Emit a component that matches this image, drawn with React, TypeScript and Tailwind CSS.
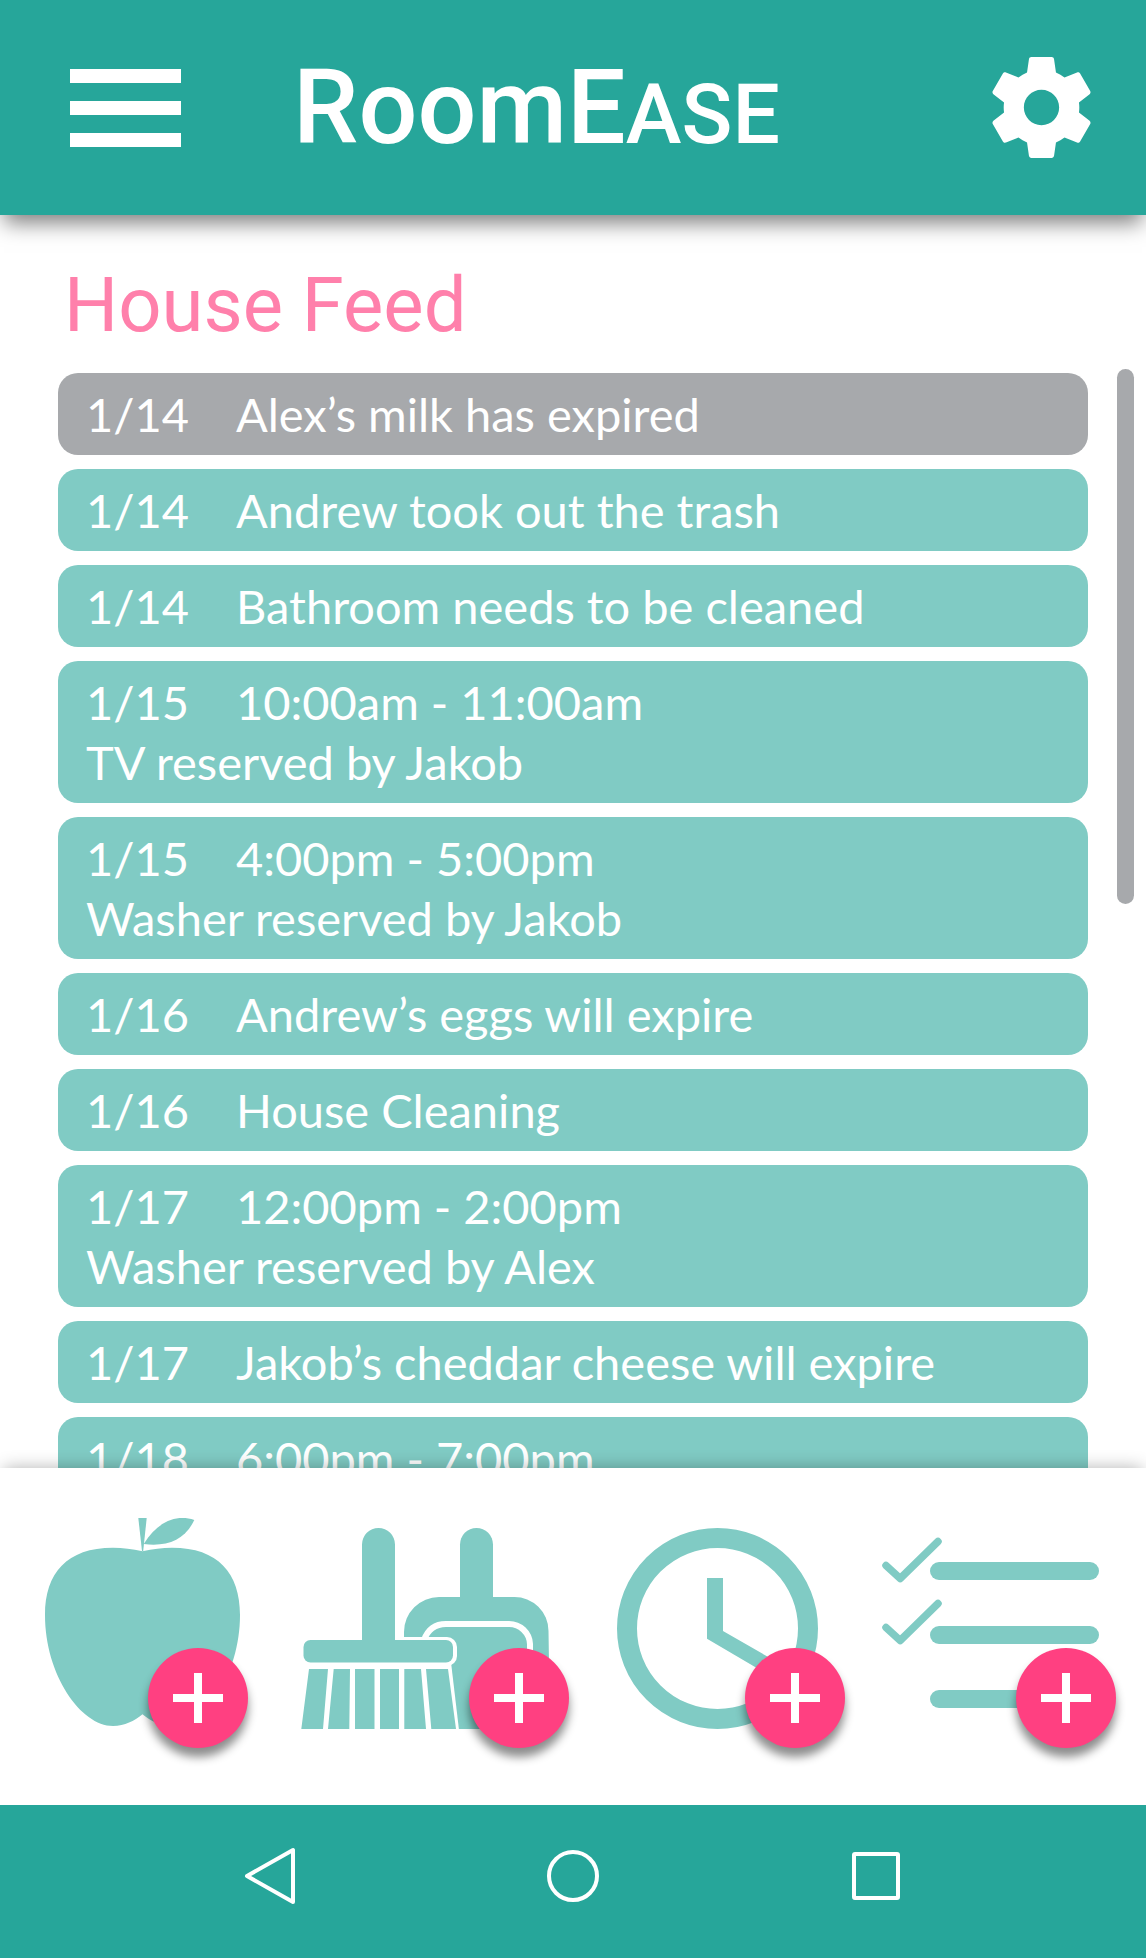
import React from "react";

type FeedEntry = { date: string; text: string; detail?: string; past?: boolean };

const entries: FeedEntry[] = [
  { date: "1/14", text: "Alex’s milk has expired", past: true },
  { date: "1/14", text: "Andrew took out the trash" },
  { date: "1/14", text: "Bathroom needs to be cleaned" },
  { date: "1/15", text: "10:00am - 11:00am", detail: "TV reserved by Jakob" },
  { date: "1/15", text: "4:00pm - 5:00pm", detail: "Washer reserved by Jakob" },
  { date: "1/16", text: "Andrew’s eggs will expire" },
  { date: "1/16", text: "House Cleaning" },
  { date: "1/17", text: "12:00pm - 2:00pm", detail: "Washer reserved by Alex" },
  { date: "1/17", text: "Jakob’s cheddar cheese will expire" },
  { date: "1/18", text: "6:00pm - 7:00pm", detail: "TV reserved by Andrew" },
];

function GearIcon() {
  return (
    <svg viewBox="0 0 24 24" className="size-[121px]" fill="currentColor" aria-hidden="true">
      <path d="M19.43 12.98c.04-.32.07-.64.07-.98s-.03-.66-.07-.98l2.11-1.65c.19-.15.24-.42.12-.64l-2-3.46c-.12-.22-.39-.3-.61-.22l-2.49 1c-.52-.4-1.08-.73-1.69-.98l-.38-2.65C14.46 2.18 14.25 2 14 2h-4c-.25 0-.46.18-.49.42l-.38 2.65c-.61.25-1.17.59-1.69.98l-2.49-1c-.23-.09-.49 0-.61.22l-2 3.46c-.13.22-.07.49.12.64l2.11 1.65c-.04.32-.07.65-.07.98s.03.66.07.98l-2.11 1.65c-.19.15-.24.42-.12.64l2 3.46c.12.22.39.3.61.22l2.49-1c.52.4 1.08.73 1.69.98l.38 2.65c.03.24.24.42.49.42h4c.25 0 .46-.18.49-.42l.38-2.65c.61-.25 1.17-.59 1.69-.98l2.49 1c.23.09.49 0 .61-.22l2-3.46c.12-.22.07-.49-.12-.64l-2.11-1.65zM12 15.5c-1.93 0-3.5-1.57-3.5-3.5s1.57-3.5 3.5-3.5 3.5 1.57 3.5 3.5-1.57 3.5-3.5 3.5z" />
    </svg>
  );
}

function AppleIcon() {
  return (
    <svg viewBox="0 0 219 230" className="h-[230px] w-[219px]" fill="currentColor" aria-hidden="true">
      <path d="M93.300 0h8.400L98.200 33h-1.200z" />
      <path d="M98.700 26C112 4 131 -4 149.300 2C140 22 122 29 98.700 26z" />
      <path d="M97.500 33.300C87 31 78 29.700 68 29.700C22 29.700 0 55 0 97C0 157 36 208 68 208C80 208 89 203 97.500 196.300C106 203 115 208 127 208C159 208 195 157 195 97C195 55 173 29.700 127 29.700C117 29.700 108 31 97.500 33.300z" />
    </svg>
  );
}

function BroomIcon() {
  return (
    <svg viewBox="0 -10 279 230" className="h-[230px] w-[279px]" fill="currentColor" aria-hidden="true">
      <path d="M159 80V16.500a16.500 16.500 0 0 1 33 0V80z" />
      <path d="M103 201V104a35 35 0 0 1 35-35h75a34 34 0 0 1 34.500 34L249 201z" />
      <path d="M123 112C127 101 134 96 145 96h63a21 21 0 0 1 21 20v12" fill="none" stroke="white" strokeWidth="6" />
      <rect x="-1" y="109" width="157" height="29" rx="10" fill="white" />
      <path d="M0 130H149.500L158 202H0z" fill="white" />
      <path d="M61 116V16.500a16.500 16.500 0 0 1 33 0V116z" />
      <rect x="2.500" y="112" width="149.500" height="22.500" rx="7" />
      <path d="M8 141h19L22 201H.3zM32.700 141H49L48.300 201H27zM54 141h19.500V201H54zM79 141h19V201H79zM103.300 141H120L125 201H103.300zM125 141h22L155 201H130.300z" />
    </svg>
  );
}

function ClockIcon() {
  return (
    <svg viewBox="0 -10 228 230" className="h-[230px] w-[228px]" fill="currentColor" aria-hidden="true">
      <circle cx="100.500" cy="100.500" r="90.500" fill="none" stroke="currentColor" strokeWidth="20" />
      <path d="M90 50h16v53l54 31l-10 12L90 110.700z" />
    </svg>
  );
}

function ChecklistIcon() {
  return (
    <svg viewBox="0 -10 235 230" className="h-[230px] w-[235px]" fill="currentColor" aria-hidden="true">
      <rect x="48" y="34" width="169" height="18" rx="9" />
      <rect x="48" y="98" width="169" height="18" rx="9" />
      <rect x="48" y="162" width="169" height="18" rx="9" />
      <g fill="none" stroke="currentColor" strokeWidth="7.500" strokeLinecap="round" strokeLinejoin="round">
        <path d="M4 37.500L18.200 50.500L56 13.500" />
        <path d="M4 99.500L18.200 112.500L56 75.500" />
      </g>
    </svg>
  );
}

const actions = [
  { name: "food", Icon: AppleIcon, place: "left-[103px]" },
  { name: "cleaning", Icon: BroomIcon, place: "left-[168px]" },
  { name: "reservation", Icon: ClockIcon, place: "left-[128px]" },
  { name: "task", Icon: ChecklistIcon, place: "left-[134px]" },
];

export default function App() {
  return (
    <div className="flex h-screen flex-col overflow-hidden bg-white font-['Lato','Open_Sans',sans-serif]">
      <header className="relative z-10 flex h-[215px] shrink-0 items-center bg-[#26a69a] pr-11 pl-[70px] text-white shadow-[0_12px_20px_-4px_rgba(0,0,0,0.5)]">
        <button type="button" aria-label="Open menu" className="flex w-[111px] flex-col gap-[18px]">
          <span className="h-[14px] bg-white" />
          <span className="h-[14px] bg-white" />
          <span className="h-[14px] bg-white" />
        </button>
        <h1 className="ml-[112px] font-['Roboto',sans-serif] text-[104px] leading-none font-medium">
          RoomE<span className="text-[84px] uppercase">ase</span>
        </h1>
        <button type="button" aria-label="Settings" className="ml-auto">
          <GearIcon />
        </button>
      </header>

      <main className="flex min-h-0 flex-1 flex-col">
        <h2 className="shrink-0 pt-10 pb-[14px] pl-[64px] font-['Roboto',sans-serif] text-[76px] leading-[100px] text-[#ff80ab]">
          House Feed
        </h2>
        <div className="flex min-h-0 flex-1 pr-3 pl-[58px]">
          <ul className="flex flex-1 flex-col gap-[14px] pt-1 text-[47px] leading-[60px] text-white">
            {entries.map((entry, index) => (
              <li
                key={index}
                className={`shrink-0 rounded-[20px] px-7 py-[11px] ${entry.past ? "bg-[#a7a9ac]" : "bg-[#80cbc4]"}`}
              >
                <div className="flex">
                  <span className="w-[150px]">{entry.date}</span>
                  <span>{entry.text}</span>
                </div>
                {entry.detail && <p>{entry.detail}</p>}
              </li>
            ))}
          </ul>
          <div className="ml-[29px] h-[535px] w-[17px] rounded-full bg-[#a7a9ac]" aria-hidden="true" />
        </div>
      </main>

      <section
        aria-label="Quick add"
        className="relative z-10 flex shrink-0 justify-between bg-white pt-[50px] pr-[29px] pb-[57px] pl-[45px] shadow-[0_-4px_16px_-4px_rgba(0,0,0,0.3)]"
      >
        {actions.map(({ name, Icon, place }) => (
          <div key={name} className="relative">
            <button type="button" aria-label={`Show ${name}`} className="block text-[#80cbc4]">
              <Icon />
            </button>
            <button
              type="button"
              aria-label={`Add ${name}`}
              className={`absolute bottom-0 flex size-[100px] items-center justify-center rounded-full bg-[#ff4081] text-white shadow-[0_9px_10px_rgba(0,0,0,0.45)] ${place}`}
            >
              <svg viewBox="0 0 50 50" className="size-[50px]" fill="currentColor" aria-hidden="true">
                <path d="M21 0h8v21h21v8H29v21h-8V29H0v-8h21z" />
              </svg>
            </button>
          </div>
        ))}
      </section>

      <nav
        aria-label="System"
        className="relative z-10 flex h-[153px] shrink-0 items-center justify-between bg-[#26a69a] px-[240px] pb-[11px] text-white"
      >
        <button type="button" aria-label="Back">
          <svg viewBox="0 0 60 60" className="size-[60px]" fill="none" stroke="currentColor" strokeWidth="4" strokeLinejoin="round" aria-hidden="true">
            <path d="M7 30L53 4V56z" />
          </svg>
        </button>
        <button type="button" aria-label="Home">
          <svg viewBox="0 0 60 60" className="size-[60px]" fill="none" stroke="currentColor" strokeWidth="4" aria-hidden="true">
            <circle cx="30" cy="30" r="24" />
          </svg>
        </button>
        <button type="button" aria-label="Recent apps">
          <svg viewBox="0 0 60 60" className="size-[60px]" fill="none" stroke="currentColor" strokeWidth="4" strokeLinejoin="round" aria-hidden="true">
            <rect x="8" y="8" width="44" height="44" rx="1" />
          </svg>
        </button>
      </nav>
    </div>
  );
}
